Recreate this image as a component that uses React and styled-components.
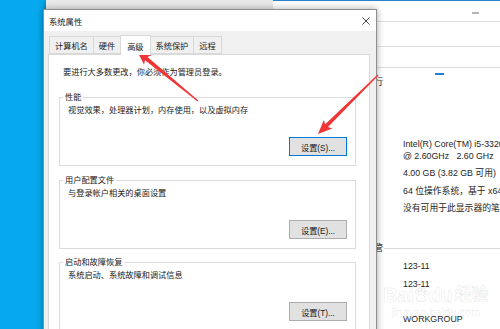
import styled, { createGlobalStyle } from 'styled-components';

const GlobalStyle = createGlobalStyle`
html, body {
  margin: 0;
  padding: 0;
}
body {
  width: 500px;
  height: 329px;
  overflow: hidden;
  background: #07a9ee;
  font-family: 'Liberation Sans', 'Noto Sans CJK SC', sans-serif;
}
`;

const Desktop = styled.div`
position: relative;
width: 500px;
height: 329px;
overflow: hidden;
background: #07a9ee;
`;

const BackWindow = styled.div`
position: absolute;
left: 46px;
top: 0;
width: 240px;
height: 40px;
background: #e9e9e9;
box-shadow: 0 0 6px rgba(0, 0, 0, 0.35);
`;

const SysWindow = styled.div`
position: absolute;
left: 273px;
top: 0;
right: 0;
bottom: 0;
background: #ffffff;
border-top: 1px solid #2b7fd0;
display: flex;
flex-direction: column;
font-size: 8.8px;
color: #1e1e1e;
`;

const SysTitleBar = styled.div`
height: 20px;
display: flex;
align-items: center;
justify-content: flex-end;
padding-right: 21px;
border-bottom: 1px solid #dedede;
`;

const Minimize = styled.span`
width: 7px;
height: 2px;
background: #b5b5b5;
margin-top: 4px;
`;

const SysBand = styled.div`
height: ${({ h }) => h}px;
border-bottom: 1px solid #dedede;
`;

const SysContent = styled.div`
display: flex;
flex-direction: column;
`;

const Hint = styled.span`
display: block;
width: 9px;
height: 2px;
margin: 5px 0 0 162px;
background: #2b7fd0;
`;

const InfoRow = styled.div`
display: grid;
grid-template-columns: 110px 1fr;
column-gap: 20px;
margin-top: ${({ mt }) => mt}px;
line-height: 12px;
white-space: nowrap;
`;

const InfoLabel = styled.span`
text-align: right;
overflow: hidden;
`;

const InfoValue = styled.span`
overflow: hidden;
`;

const HeadingRow = styled.div`
display: flex;
align-items: center;
margin-top: ${({ mt }) => mt}px;
line-height: 12px;
`;

const HeadingText = styled.span`
width: 110px;
text-align: right;
white-space: nowrap;
overflow: hidden;
`;

const HeadingLine = styled.span`
flex: 1;
height: 1px;
background: #dcdcdc;
margin-left: 1px;
`;

const Dialog = styled.div`
position: absolute;
left: 43px;
top: 9px;
width: 332px;
height: 340px;
background: #f0f0f0;
border: 1px solid #8e8e8e;
box-shadow: 0 0 7px rgba(0, 0, 0, 0.35);
display: flex;
flex-direction: column;
`;

const TitleBar = styled.div`
height: 21px;
background: #ffffff;
display: flex;
align-items: center;
justify-content: space-between;
padding: 0 6px 0 5px;
font-size: 8.3px;
color: #1a1a1a;
`;

const CloseIcon = styled.svg`
width: 8px;
height: 8px;
`;

const TabBar = styled.div`
display: flex;
align-items: flex-end;
height: 23px;
padding-left: 5px;
`;

const Tab = styled.div`
height: ${({ active }) => (active ? 19 : 16)}px;
padding: 0 ${({ active }) => (active ? 6 : 5)}px;
margin-bottom: ${({ active }) => (active ? -1 : 0)}px;
display: flex;
align-items: center;
font-size: 8.2px;
color: #1a1a1a;
background: ${({ active }) => (active ? '#ffffff' : '#f0f0f0')};
border: 1px solid #d9d9d9;
border-bottom: ${({ active }) => (active ? 'none' : '1px solid #d9d9d9')};
margin-right: -1px;
position: relative;
z-index: ${({ active }) => (active ? 2 : 1)};
`;

const Panel = styled.div`
margin: 0 6px 0 4px;
flex: 1;
background: #ffffff;
border: 1px solid #d9d9d9;
padding: 12px 13px 0 10px;
display: flex;
flex-direction: column;
font-size: 8.2px;
color: #1a1a1a;
`;

const Intro = styled.div`
line-height: 12px;
padding-left: 4px;
`;

const GroupBox = styled.div`
position: relative;
margin-top: ${({ mt }) => mt}px;
border: 1px solid #dcdcdc;
padding: 7px 8px 9px 8px;
display: flex;
flex-direction: column;
`;

const Legend = styled.span`
position: absolute;
top: -7px;
left: 3px;
padding: 0 2px;
background: #ffffff;
line-height: 13px;
`;

const GroupText = styled.div`
line-height: 12px;
`;

const Button = styled.button`
align-self: flex-end;
margin-top: 20px;
width: 58px;
height: 19px;
padding: 0;
background: #e1e1e1;
border: 1px solid ${({ focused }) => (focused ? '#0078d7' : '#adadad')};
font-family: 'Liberation Sans', 'Noto Sans CJK SC', sans-serif;
font-size: 8.2px;
color: #1a1a1a;
`;

const Watermark = styled.div`
position: absolute;
left: 383px;
top: 284px;
display: flex;
flex-direction: column;
align-items: center;
pointer-events: none;
`;

const WatermarkLogo = styled.div`
display: flex;
align-items: center;
font-family: 'Liberation Sans', 'Noto Sans CJK SC', sans-serif;
font-size: 20px;
font-weight: bold;
line-height: 22px;
color: rgba(255, 255, 255, 0.5);
-webkit-text-stroke: 0.5px rgba(170, 170, 170, 0.3);
`;

const WatermarkCn = styled.span`
font-size: 17px;
margin-left: 2px;
`;

const WatermarkUrl = styled.div`
font-family: 'Liberation Sans', sans-serif;
font-size: 11px;
line-height: 12px;
color: rgba(255, 255, 255, 0.5);
-webkit-text-stroke: 0.3px rgba(170, 170, 170, 0.3);
`;

const ArrowLayer = styled.svg`
position: absolute;
left: 0;
top: 0;
width: 500px;
height: 329px;
pointer-events: none;
`;

function arrowPoints([tx, ty], [hx, hy], headLen = 14, headHalf = 6, neck = 2, tail = 0.6) {
  const len = Math.hypot(hx - tx, hy - ty);
  const ux = (hx - tx) / len;
  const uy = (hy - ty) / len;
  const nx = -uy;
  const ny = ux;
  const bx = hx - ux * headLen;
  const by = hy - uy * headLen;
  const pts = [
    [tx + nx * tail, ty + ny * tail],
    [bx + ux * 2 + nx * neck, by + uy * 2 + ny * neck],
    [bx + nx * headHalf, by + ny * headHalf],
    [hx, hy],
    [bx - nx * headHalf, by - ny * headHalf],
    [bx + ux * 2 - nx * neck, by + uy * 2 - ny * neck],
    [tx - nx * tail, ty - ny * tail],
  ];
  return pts.map(([x, y]) => `${x.toFixed(1)},${y.toFixed(1)}`).join(' ');
}

const tabs = ['计算机名', '硬件', '高级', '系统保护', '远程'];

const groups = [
  { title: '性能', text: '视觉效果，处理器计划，内存使用，以及虚拟内存', button: '设置(S)...', focused: true, mt: 18 },
  { title: '用户配置文件', text: '与登录帐户相关的桌面设置', button: '设置(E)...', mt: 14 },
  { title: '启动和故障恢复', text: '系统启动、系统故障和调试信息', button: '设置(T)...', mt: 13 },
];

function App() {
  return (
    <Desktop>
      <GlobalStyle />
      <BackWindow />
      <SysWindow>
        <SysTitleBar>
          <Minimize />
        </SysTitleBar>
        <SysBand h={24} />
        <SysBand h={20} />
        <SysContent>
          <Hint />
          <InfoRow mt={1}>
            <InfoLabel>正在运行</InfoLabel>
            <InfoValue />
          </InfoRow>
          <InfoRow mt={50}>
            <InfoLabel />
            <InfoValue>
              Intel(R) Core(TM) i5-3320M CPU
              <br />
              @ 2.60GHz &nbsp; 2.60 GHz
            </InfoValue>
          </InfoRow>
          <InfoRow mt={5}>
            <InfoLabel />
            <InfoValue>4.00 GB (3.82 GB 可用)</InfoValue>
          </InfoRow>
          <InfoRow mt={6}>
            <InfoLabel />
            <InfoValue>64 位操作系统，基于 x64 的处理器</InfoValue>
          </InfoRow>
          <InfoRow mt={5}>
            <InfoLabel />
            <InfoValue>没有可用于此显示器的笔或触控输入</InfoValue>
          </InfoRow>
          <HeadingRow mt={28}>
            <HeadingText>计算机名、域和工作组管</HeadingText>
            <HeadingLine />
          </HeadingRow>
          <InfoRow mt={6}>
            <InfoLabel />
            <InfoValue>123-11</InfoValue>
          </InfoRow>
          <InfoRow mt={6}>
            <InfoLabel />
            <InfoValue>123-11</InfoValue>
          </InfoRow>
          <InfoRow mt={23}>
            <InfoLabel />
            <InfoValue>WORKGROUP</InfoValue>
          </InfoRow>
        </SysContent>
      </SysWindow>

      <Watermark>
        <WatermarkLogo>
          Bai
          <svg width="14" height="16" viewBox="0 0 14 16">
            <g fill="rgba(255,255,255,0.5)" stroke="rgba(170,170,170,0.35)" strokeWidth="0.6">
              <ellipse cx="3" cy="5" rx="1.6" ry="2.2" />
              <ellipse cx="6" cy="2.8" rx="1.6" ry="2.2" />
              <ellipse cx="9.5" cy="3.2" rx="1.6" ry="2.2" />
              <ellipse cx="12" cy="6" rx="1.5" ry="2" />
              <path d="M7 7.5 C4 7.5 2 11 2.5 13 C3 15 5.5 14.5 7 14 C8.5 14.5 11 15 11.5 13 C12 11 10 7.5 7 7.5 Z" />
            </g>
          </svg>
          du
          <WatermarkCn>经验</WatermarkCn>
        </WatermarkLogo>
        <WatermarkUrl>jingyan.baidu.com</WatermarkUrl>
      </Watermark>

      <Dialog>
        <TitleBar>
          <span>系统属性</span>
          <CloseIcon viewBox="0 0 8 8">
            <path d="M0.5 0.5 L7.5 7.5 M7.5 0.5 L0.5 7.5" stroke="#333" strokeWidth="0.9" />
          </CloseIcon>
        </TitleBar>
        <TabBar>
          {tabs.map((t) => (
            <Tab key={t} active={t === '高级'}>
              {t}
            </Tab>
          ))}
        </TabBar>
        <Panel>
          <Intro>要进行大多数更改，你必须作为管理员登录。</Intro>
          {groups.map((g) => (
            <GroupBox key={g.title} mt={g.mt}>
              <Legend>{g.title}</Legend>
              <GroupText>{g.text}</GroupText>
              <Button type="button" focused={g.focused}>
                {g.button}
              </Button>
            </GroupBox>
          ))}
        </Panel>
      </Dialog>

      <ArrowLayer viewBox="0 0 500 329">
        <polygon points={arrowPoints([198, 101], [137, 51])} fill="#ef3535" />
        <polygon points={arrowPoints([378, 75], [318, 134])} fill="#ef3535" />
      </ArrowLayer>
    </Desktop>
  );
}

export default App;
